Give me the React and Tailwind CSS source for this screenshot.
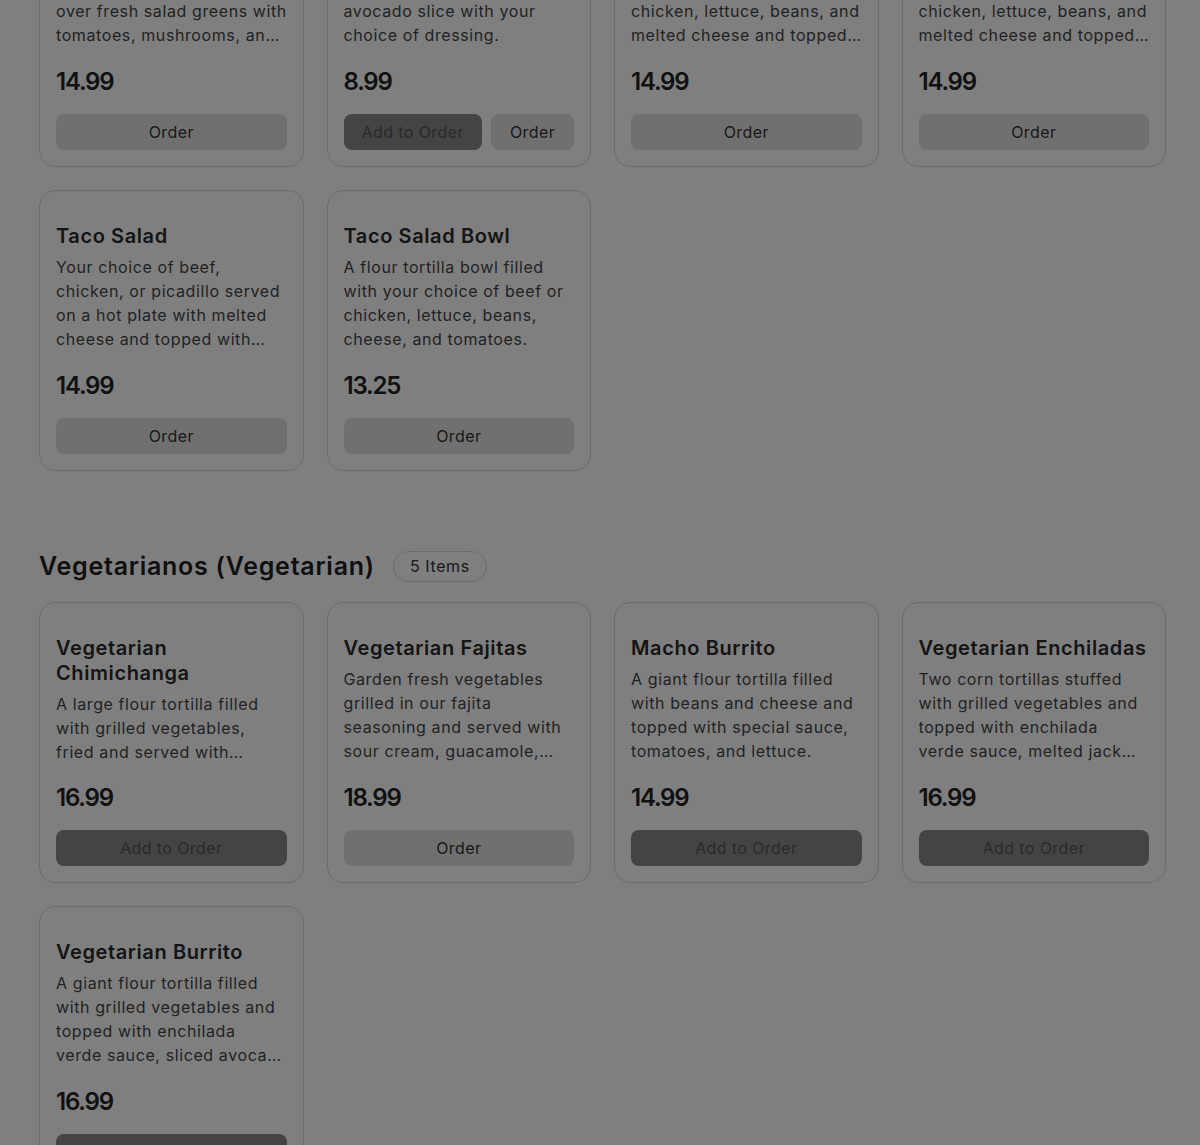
import React from "react";

const font = { fontFamily: "Inter, 'Noto Sans', sans-serif" };

function Desc({ lines, last, mode }) {
  return (
    <div className="mt-[6px] text-[16px] leading-[24px] tracking-[0.6px] text-[#454545]">
      {lines.map((l, i) => (
        <p key={i} className="whitespace-nowrap">{l}</p>
      ))}
      <p className={mode === "truncate" ? "truncate" : "line-clamp-1"}>{last}</p>
    </div>
  );
}

function Card({ title, lines, last, mode = "clamp", price, buttons = ["Order"] }) {
  return (
    <div className="bg-white border border-[#d9d9d9] rounded-2xl px-4 pt-[33px] pb-4 flex flex-col h-[281px]">
      <div className="h-[127px] overflow-hidden">
        <h3 className="text-[20px] leading-[25px] font-semibold tracking-[0.6px] text-[#2a2a2a]">{title}</h3>
        <Desc lines={lines} last={last} mode={mode} />
      </div>
      <div className="mt-[19px] h-[32px] text-[24px] leading-[32px] font-semibold tracking-[-1.2px] text-[#222]">{price}</div>
      <div className="mt-[16px] flex gap-[9px]">
        {buttons.map((b, i) =>
          b === "Add" ? (
            <button key={i} className="flex-1 h-[36px] rounded-lg bg-[#888888] text-[#555555] text-[16px] tracking-[0.4px]">Add to Order</button>
          ) : (
            <button key={i} className={`${buttons.length > 1 ? "w-[83px]" : "flex-1"} h-[36px] rounded-lg bg-[#e1e1e1] text-[#333] text-[16px] tracking-[0.4px]`}>Order</button>
          )
        )}
      </div>
    </div>
  );
}

export default function App() {
  return (
    <div className="relative bg-white min-h-[1145px] overflow-hidden" style={font}>
      <div className="ml-[39px] w-[1127px]">
        <div className="grid grid-cols-4 gap-[23px] mt-[-114px]">
          <Card
            title="Ensalada de Fajita"
            lines={["Grilled fajita chicken", "and sautéed peppers", "over fresh salad greens with"]}
            last="tomatoes, mushrooms, and onions."
            mode="truncate"
            price="14.99"
          />
          <Card
            title="Ensalada Verde"
            lines={["Fresh crisp lettuce", "with tomatoes, onions", "avocado slice with your"]}
            last="choice of dressing."
            price="8.99"
            buttons={["Add", "Order"]}
          />
          <Card
            title="Fajita Taco Salad"
            lines={["A flour tortilla bowl", "filled with beef or", "chicken, lettuce, beans, and"]}
            last="melted cheese and topped with sour cream."
            mode="truncate"
            price="14.99"
          />
          <Card
            title="Taco Salad Supreme"
            lines={["A flour tortilla bowl", "filled with steak or", "chicken, lettuce, beans, and"]}
            last="melted cheese and topped with guacamole."
            mode="truncate"
            price="14.99"
          />
          <Card
            title="Taco Salad"
            lines={["Your choice of beef,", "chicken, or picadillo served", "on a hot plate with melted"]}
            last="cheese and topped with guacamole, lettuce and tomatoes."
            price="14.99"
          />
          <Card
            title="Taco Salad Bowl"
            lines={["A flour tortilla bowl filled", "with your choice of beef or", "chicken, lettuce, beans,"]}
            last="cheese, and tomatoes."
            price="13.25"
          />
        </div>

        <div className="mt-[77px] flex items-center h-[36px] gap-[18px]">
          <h2 className="text-[25px] leading-[36px] font-semibold tracking-[0.75px] text-[#1e1e1e]">Vegetarianos (Vegetarian)</h2>
          <span className="h-[31px] px-4 flex items-center rounded-full border border-[#d9d9d9] text-[16px] tracking-[0.6px] text-[#333]">5 Items</span>
        </div>

        <div className="grid grid-cols-4 gap-[23px] mt-[18px]">
          <Card
            title={<>Vegetarian<br />Chimichanga</>}
            lines={["A large flour tortilla filled", "with grilled vegetables,"]}
            last="fried and served with guacamole, rice and beans."
            price="16.99"
            buttons={["Add"]}
          />
          <Card
            title="Vegetarian Fajitas"
            lines={["Garden fresh vegetables", "grilled in our fajita", "seasoning and served with"]}
            last="sour cream, guacamole, tortillas, rice and beans."
            price="18.99"
          />
          <Card
            title="Macho Burrito"
            lines={["A giant flour tortilla filled", "with beans and cheese and", "topped with special sauce,"]}
            last="tomatoes, and lettuce."
            price="14.99"
            buttons={["Add"]}
          />
          <Card
            title="Vegetarian Enchiladas"
            lines={["Two corn tortillas stuffed", "with grilled vegetables and", "topped with enchilada"]}
            last="verde sauce, melted jack cheese and sour cream."
            price="16.99"
            buttons={["Add"]}
          />
          <Card
            title="Vegetarian Burrito"
            lines={["A giant flour tortilla filled", "with grilled vegetables and", "topped with enchilada"]}
            last="verde sauce, sliced avocado and sour cream."
            mode="truncate"
            price="16.99"
            buttons={["Add"]}
          />
        </div>
      </div>
      <div className="fixed inset-0 bg-black/50" />
    </div>
  );
}
